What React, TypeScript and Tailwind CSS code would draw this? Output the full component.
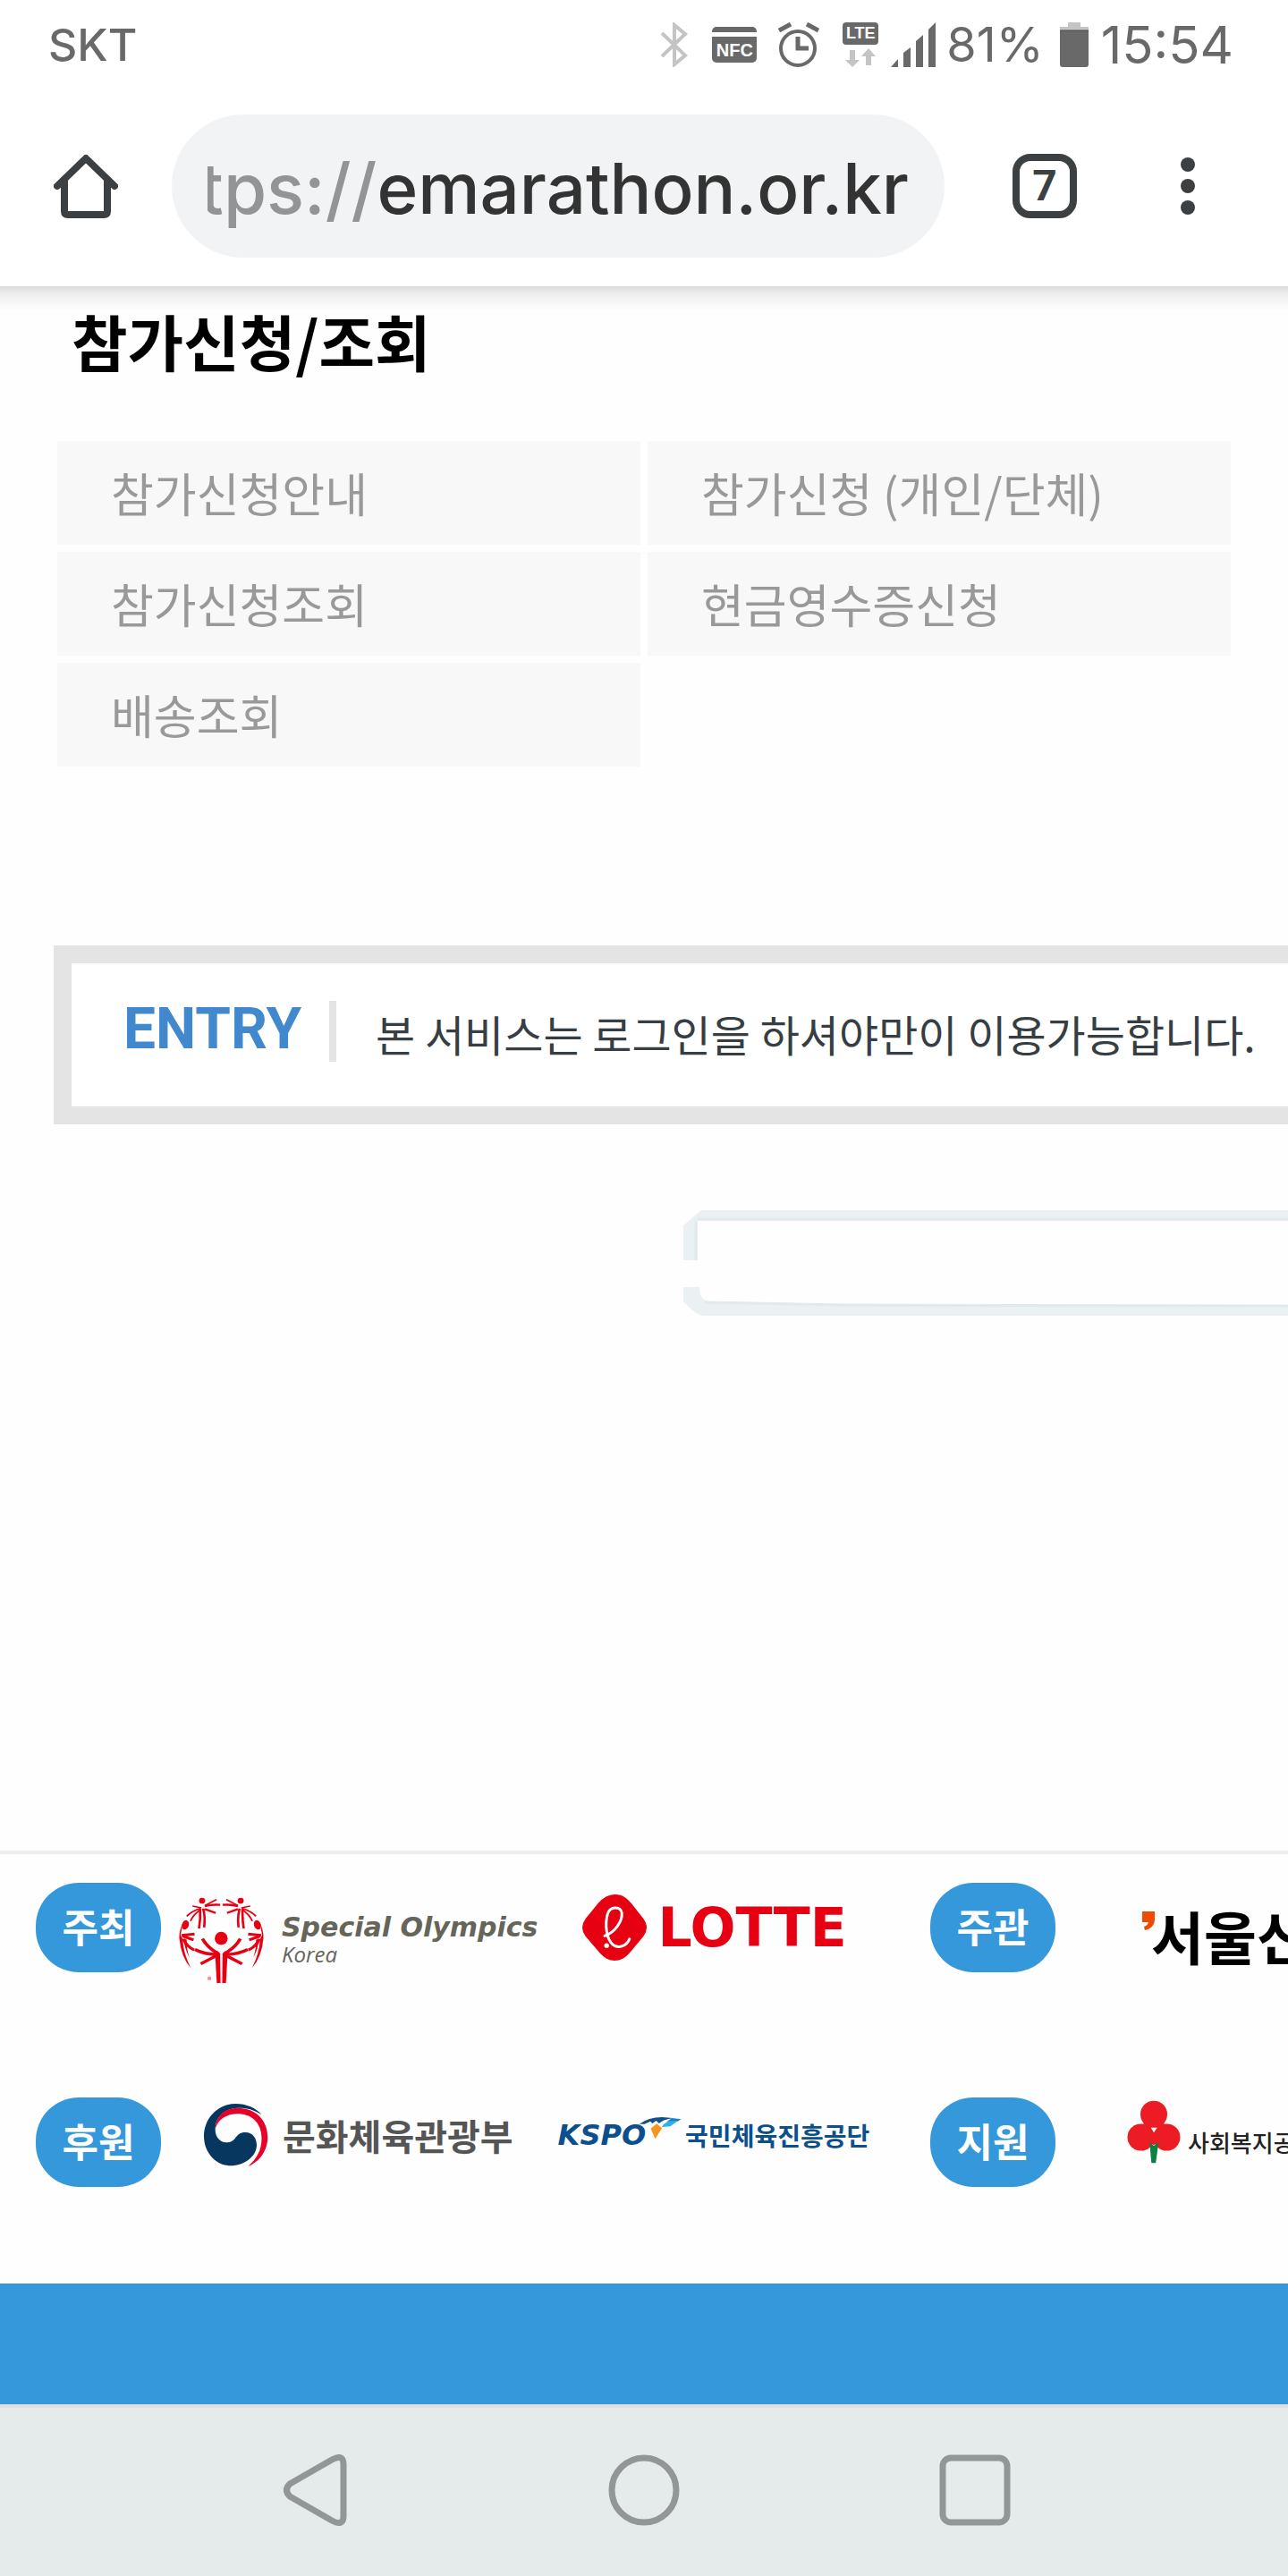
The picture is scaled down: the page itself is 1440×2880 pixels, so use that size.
import type { ReactNode } from 'react';

const menuItems = [
  { name: '참가신청안내', href: '#guide' },
  { name: '참가신청 (개인/단체)', href: '#entry' },
  { name: '참가신청조회', href: '#lookup' },
  { name: '현금영수증신청', href: '#receipt' },
  { name: '배송조회', href: '#delivery' },
];

function BluetoothIcon() {
  return (
    <svg className="w-8 h-[50px]" viewBox="0 0 32 50" fill="none" stroke="#c4c4c4" strokeWidth="4">
      <path d="M2 12 L28 37 L16 47 V3 L28 13 L2 38" />
    </svg>
  );
}

function AlarmIcon() {
  return (
    <svg className="w-[46px] h-[50px]" viewBox="0 0 46 50" fill="none" stroke="#696969">
      <ellipse cx="22" cy="29" rx="19" ry="19" strokeWidth="4" />
      <path d="M22 16 V29 H34" strokeWidth="5" />
      <path d="M1 9 L14 2 M32 2 L45 9" strokeWidth="5" />
    </svg>
  );
}

function DataArrows() {
  return (
    <svg className="w-[34px] h-[21px]" viewBox="0 0 34 21" fill="#c4c4c4">
      <path d="M5 2 H11 V13 H16 L8 21 L0 13 H5 Z" />
      <path d="M23 19 V9 H18 L26 0 L34 9 H29 V19 Z" />
    </svg>
  );
}

function SignalIcon() {
  return (
    <svg className="w-[50px] h-[50px]" viewBox="0 0 50 50" fill="#696969">
      <path d="M0 50 L8 41 V50 Z" />
      <path d="M14 34 L22 28 V50 H14 Z" />
      <path d="M28 21 L36 14 V50 H28 Z" />
      <path d="M42 8 L50 0 V50 H42 Z" />
    </svg>
  );
}

function BatteryIcon() {
  return (
    <svg className="w-8 h-[50px]" viewBox="0 0 32 50">
      <path d="M9 0 H23 V5 H32 V9 H0 V5 H9 Z" fill="#c4c4c4" />
      <path d="M0 9 H32 V47 Q32 50 29 50 H3 Q0 50 0 47 Z" fill="#696969" />
      <path d="M0 9 H32" stroke="#4a4a4a" />
    </svg>
  );
}

function HomeIcon() {
  return (
    <svg className="w-[72px] h-[72px]" viewBox="0 0 72 72" fill="none" stroke="#3c4043" strokeWidth="8">
      <path d="M4 36 L36 5 L68 36" strokeLinecap="round" strokeLinejoin="round" />
      <path d="M12 29 V64 Q12 68 16 68 H56 Q60 68 60 64 V29" />
    </svg>
  );
}

function SpecialOlympicsMark() {
  const half = (
    <>
      <g fill="#e60012" stroke="none">
        <path d="M575 395 Q576 390 583 391 L590 398 L591 497 L580 497 Z" />
        <ellipse cx="537" cy="222" rx="9" ry="10" />
        <ellipse cx="488" cy="303" rx="10" ry="16" transform="rotate(14 488 303)" />
        <path d="M480 298 Q470 320 470 345 Q475 410 504 447 Q482 400 480 350 L474 338 Z" />
        <path d="M483 350 Q486 385 500 412 Q490 380 492 352 Z" />
      </g>
      <path d="M538 349 Q552 378 583 398 M516 385 Q545 402 582 402 M533 433 L582 404" strokeWidth="10" />
      <path d="M477 338 L515 333 M480 340 L512 353 M482 350 Q492 376 514 387" strokeWidth="9" />
      <path d="M531 248 Q533 280 528 315 M540 248 Q547 275 543 311 M545 240 Q565 234 590 236 M545 250 L577 263" strokeWidth="7" />
      <path d="M509 240 L535 246 M545 238 L579 218 M532 248 Q507 256 492 274 M532 252 Q511 268 503 290" strokeWidth="5" />
    </>
  );
  return (
    <div className="relative shrink-0">
      <svg
        className="w-[95px] h-[97px]"
        viewBox="469 210 249 290"
        preserveAspectRatio="none"
        fill="none"
        stroke="#e60012"
      >
        <ellipse cx="593" cy="348" rx="19" ry="22" fill="#e60012" stroke="none" />
        {half}
        <g transform="translate(1187 0) scale(-1 1)">{half}</g>
      </svg>
      <span className="absolute bottom-0 left-8 text-[9px] leading-[9px] text-[#e60012]">®</span>
    </div>
  );
}

function LotteMark() {
  return (
    <svg className="w-[72px] h-[74px] shrink-0" viewBox="97 200 135 220" preserveAspectRatio="none">
      <path
        fill="#e60012"
        d="M165 200 C183 200 192 215 200 230 L225 280 Q232 296 232 310 Q232 325 225 340 L196 395 Q183 420 165 420 Q147 420 134 395 L104 340 Q97 325 97 310 Q97 295 104 280 L130 230 Q146 200 165 200 Z"
      />
      <path
        fill="none"
        stroke="#fff"
        strokeWidth="3"
        strokeLinecap="round"
        vectorEffect="non-scaling-stroke"
        d="M144 338 C166 325 181 290 180 262 C178 238 155 238 150 265 C144 300 147 350 162 368 C174 382 190 370 196 348"
      />
      <ellipse cx="148" cy="370" rx="5" ry="8" fill="#fff" />
    </svg>
  );
}

function TaegeukMark() {
  return (
    <svg className="w-[72px] h-[70px] shrink-0" viewBox="547 123 188 210" preserveAspectRatio="none">
      <path
        fill="#07365f"
        d="M625 331 C580 331 547 285 547 232 C547 170 590 123 640 123 C670 123 700 137 715 160 C695 143 670 136 645 137 C600 140 580 175 580 210 C580 235 595 253 612 253 C645 253 635 219 668 219 C690 219 701 240 701 262 C701 300 665 331 625 331 Z"
      />
      <path
        fill="#e8002b"
        d="M580 210 C580 170 605 137 645 137 C700 137 733 180 733 235 C733 280 710 318 676 333 C705 305 718 270 715 230 C712 185 685 157 645 157 C610 157 585 180 580 210 Z"
      />
    </svg>
  );
}

function KspoWing() {
  return (
    <svg className="w-12 h-[26px] shrink-0" viewBox="220 172 88 78" preserveAspectRatio="none">
      <path d="M221 198 Q240 176 268 175 L290 178 Q268 184 262 196 L256 187 L248 196 L244 189 L232 198 Z" fill="#134f8d" />
      <path d="M288 178 L307 182 L300 189 L278 190 Z" fill="#1c7fc9" />
      <path d="M300 188 L285 206 L267 208 Q272 196 280 189 Z" fill="#25b4ea" />
      <path d="M257 197 L268 212 L254 248 L245 213 Z" fill="#f7941d" />
    </svg>
  );
}

function FruitMark() {
  return (
    <svg className="w-[60px] h-[71px] shrink-0" viewBox="1230 112 112 212" preserveAspectRatio="none">
      <g fill="#ed1c24">
        <ellipse cx="1286" cy="159" rx="28" ry="45" />
        <ellipse cx="1259" cy="236" rx="28" ry="45" />
        <ellipse cx="1313" cy="236" rx="28" ry="45" />
        <path d="M1264 180 H1308 L1304 245 L1286 262 L1268 245 Z" />
      </g>
      <path d="M1280 204 H1293 L1286 220 Z" fill="#fff" />
      <path d="M1277 252 L1286 264 L1296 252 L1290 322 L1281 322 Z" fill="#0b8040" />
    </svg>
  );
}

function Badge({ children }: { children: ReactNode }) {
  return (
    <h2 className="flex h-[100px] w-[140px] shrink-0 items-center justify-center rounded-[48px] bg-[#3598db] pb-1 text-[44px] leading-[48px] font-bold text-white">
      {children}
    </h2>
  );
}

function StatusBar() {
  return (
    <div className="flex h-24 items-center justify-between pt-1 pr-[61px] pl-[54px] font-['Inter',sans-serif] text-[54px] leading-[60px] text-[#696969]">
      <span className="text-[50px] font-medium">SKT</span>
      <div className="flex items-center">
        <BluetoothIcon />
        <div className="ml-[26px] flex h-10 w-[50px] flex-col overflow-hidden rounded-[5px] bg-[#696969]">
          <div className="mt-[6px] h-[5px] w-full bg-white" />
          <span className="mt-1 text-center font-['Liberation_Sans',sans-serif] text-[20px] leading-[22px] font-bold text-white">
            NFC
          </span>
        </div>
        <div className="ml-6">
          <AlarmIcon />
        </div>
        <div className="ml-[26px] flex h-[50px] w-10 flex-col items-center justify-between">
          <span className="w-10 rounded-[4px] bg-[#696969] text-center font-['Liberation_Sans',sans-serif] text-[18px] leading-[25px] font-bold text-white">
            LTE
          </span>
          <DataArrows />
        </div>
        <div className="ml-[14px]">
          <SignalIcon />
        </div>
        <span className="ml-3">81%</span>
        <div className="ml-[18px]">
          <BatteryIcon />
        </div>
        <span className="ml-[14px] text-[58px]">15:54</span>
      </div>
    </div>
  );
}

function Toolbar() {
  return (
    <div className="flex items-center py-8 pr-24 pl-[60px]">
      <button type="button" aria-label="홈">
        <HomeIcon />
      </button>
      <button
        type="button"
        className="ml-[60px] flex h-40 min-w-0 flex-1 rounded-[80px] bg-[#f1f3f4] px-10"
      >
        <span className="flex h-full w-full items-center justify-end overflow-hidden pt-1.5 font-['Inter',sans-serif] text-[78px] leading-[100px] font-medium whitespace-nowrap text-[#333]">
          <span className="text-[#929496]">tps://</span>emarathon.or.kr
        </span>
      </button>
      <button
        type="button"
        className="ml-[76px] flex h-[72px] w-[72px] items-center justify-center rounded-[20px] border-8 border-[#3c4043] font-['Roboto',sans-serif] text-[48px] leading-[48px] font-bold text-[#3c4043]"
      >
        7
      </button>
      <button type="button" aria-label="메뉴" className="ml-[108px] flex w-8 flex-col items-center gap-2">
        <span className="h-4 w-4 rounded-full bg-[#3c4043]" />
        <span className="h-4 w-4 rounded-full bg-[#3c4043]" />
        <span className="h-4 w-4 rounded-full bg-[#3c4043]" />
      </button>
    </div>
  );
}

function Sponsors() {
  return (
    <footer className="border-t-4 border-[#eee]">
      <div className="grid grid-cols-[minmax(0,5fr)_minmax(0,2fr)] gap-y-[140px] overflow-hidden pt-8 pb-[108px] pl-10 whitespace-nowrap">
        <div className="flex h-[100px] items-center">
          <Badge>주최</Badge>
          <div className="mt-7 ml-5 flex items-center gap-5">
            <SpecialOlympicsMark />
            <div className="text-[#66655a] italic">
              <div className="font-['DejaVu_Sans',sans-serif] text-[30px] leading-8 font-bold">Special Olympics</div>
              <div className="font-['Open_Sans',sans-serif] text-[24px] leading-7">Korea</div>
            </div>
          </div>
          <div className="ml-[50px] flex items-center gap-3">
            <LotteMark />
            <span className="font-['DejaVu_Sans',sans-serif] text-[60px] leading-[60px] font-bold text-[#e60012]">LOTTE</span>
          </div>
        </div>

        <div className="flex h-[100px] items-center">
          <Badge>주관</Badge>
          <div className="mt-4 ml-24 flex items-start">
            <svg className="h-[21px] w-[15px] shrink-0" viewBox="0 0 15 21" fill="#f04a00">
              <path d="M1 0 H15 V10 Q14 19 4 21 L3 17 Q7 16 8 12 H1 Z" />
            </svg>
            <span className="-ml-1 text-[64px] leading-[52px] font-bold text-black">서울신</span>
          </div>
        </div>

        <div className="flex h-[100px] items-center">
          <Badge>후원</Badge>
          <div className="mb-4 ml-12 flex items-center gap-4">
            <TaegeukMark />
            <span className="text-[40px] leading-[44px] font-bold text-[#555]">문화체육관광부</span>
          </div>
          <div className="mb-4 ml-[50px] flex items-center">
            <span className="font-['DejaVu_Sans',sans-serif] text-[32px] leading-10 font-bold text-[#0b4f8f] italic">
              KSPO
            </span>
            <div className="-ml-2 mb-4">
              <KspoWing />
            </div>
            <span className="ml-1 text-[28px] leading-8 font-bold text-[#0b4f8f]">국민체육진흥공단</span>
          </div>
        </div>

        <div className="flex h-[100px] items-center">
          <Badge>지원</Badge>
          <div className="mb-6 ml-20 flex items-center gap-2">
            <FruitMark />
            <span className="mt-6 text-[26px] leading-7 font-medium text-[#222]">사회복지공</span>
          </div>
        </div>
      </div>
      <div className="h-[135px] bg-[#3598db]" />
    </footer>
  );
}

function AndroidNav() {
  return (
    <nav className="flex h-48 items-center justify-center gap-[290px] border-t-4 border-[#dfdfdf] bg-[#e5eaea] pb-1">
      <button type="button" aria-label="뒤로">
        <svg className="h-20 w-20" viewBox="0 0 80 80" fill="none" stroke="#929696" strokeWidth="7">
          <path d="M14 33 L61 6 Q74 -1 74 11 V69 Q74 81 61 74 L14 47 Q7 40 14 33 Z" />
        </svg>
      </button>
      <button type="button" aria-label="홈 화면">
        <svg className="h-20 w-20" viewBox="0 0 80 80" fill="none" stroke="#929696" strokeWidth="7">
          <circle cx="40" cy="40" r="36" />
        </svg>
      </button>
      <button type="button" aria-label="최근 앱">
        <svg className="h-20 w-20" viewBox="0 0 80 80" fill="none" stroke="#929696" strokeWidth="7">
          <rect x="4" y="4" width="72" height="72" rx="9" />
        </svg>
      </button>
    </nav>
  );
}

export default function App() {
  return (
    <div className="overflow-hidden bg-[#fefefe] font-['Noto_Sans_CJK_KR',sans-serif]">
      <header className="relative bg-white">
        <StatusBar />
        <Toolbar />
        {/* Toolbar shadow over the page */}
        <div className="absolute top-full right-0 left-0 h-7 bg-linear-to-b from-[#d9dbda] via-[#eeeeee] via-30% to-transparent" />
      </header>

      <main>
        <h1 className="pt-[25px] pl-20 text-[68px] leading-[72px] font-bold text-black">참가신청/조회</h1>

        <ul className="mx-16 mt-[76px] grid grid-cols-2 gap-2">
          {menuItems.map((item) => (
            <li key={item.name}>
              <a
                href={item.href}
                className="flex h-[116px] items-center bg-[#f8f8f8] pl-[60px] text-[52px] leading-[60px] text-[#999]"
              >
                {item.name}
              </a>
            </li>
          ))}
        </ul>

        {/* Login notice, runs past the right edge */}
        <section className="mt-[200px] ml-[60px] flex h-[200px] items-center border-[20px] border-r-0 border-[#e4e4e4] bg-white pl-[58px] whitespace-nowrap">
          <strong className="mb-3 w-[200px] font-['Roboto',sans-serif] text-[64px] leading-[72px] font-bold text-[#4189cc]">
            ENTRY
          </strong>
          <span className="mb-2 ml-[30px] h-[68px] w-2 bg-[#e4e4e4]" />
          <p className="mb-1 ml-11 text-[48px] leading-[56px] text-[#373e43]">
            본 서비스는 로그인을 하셔야만이 이용가능합니다.
          </p>
        </section>

        <button type="button" aria-label="로그인" className="mt-24 ml-[764px] block">
          <svg className="h-[118px] w-[676px]" viewBox="0 0 676 118" fill="#ebf0f2">
            <path d="M20 0 H676 V12 H16 V56 H0 V17 Z" />
            <path d="M0 86 H18 Q18 100 28 102 L180 105 L676 106 V118 H22 Q14 117 0 102 Z" />
            <path d="M16 10 H676 M14 12 V56 M24 103 L180 106 L676 107" stroke="#e1e9ec" strokeWidth="3" fill="none" />
          </svg>
        </button>
      </main>

      <div className="mt-[598px]">
        <Sponsors />
      </div>
      <AndroidNav />
    </div>
  );
}
